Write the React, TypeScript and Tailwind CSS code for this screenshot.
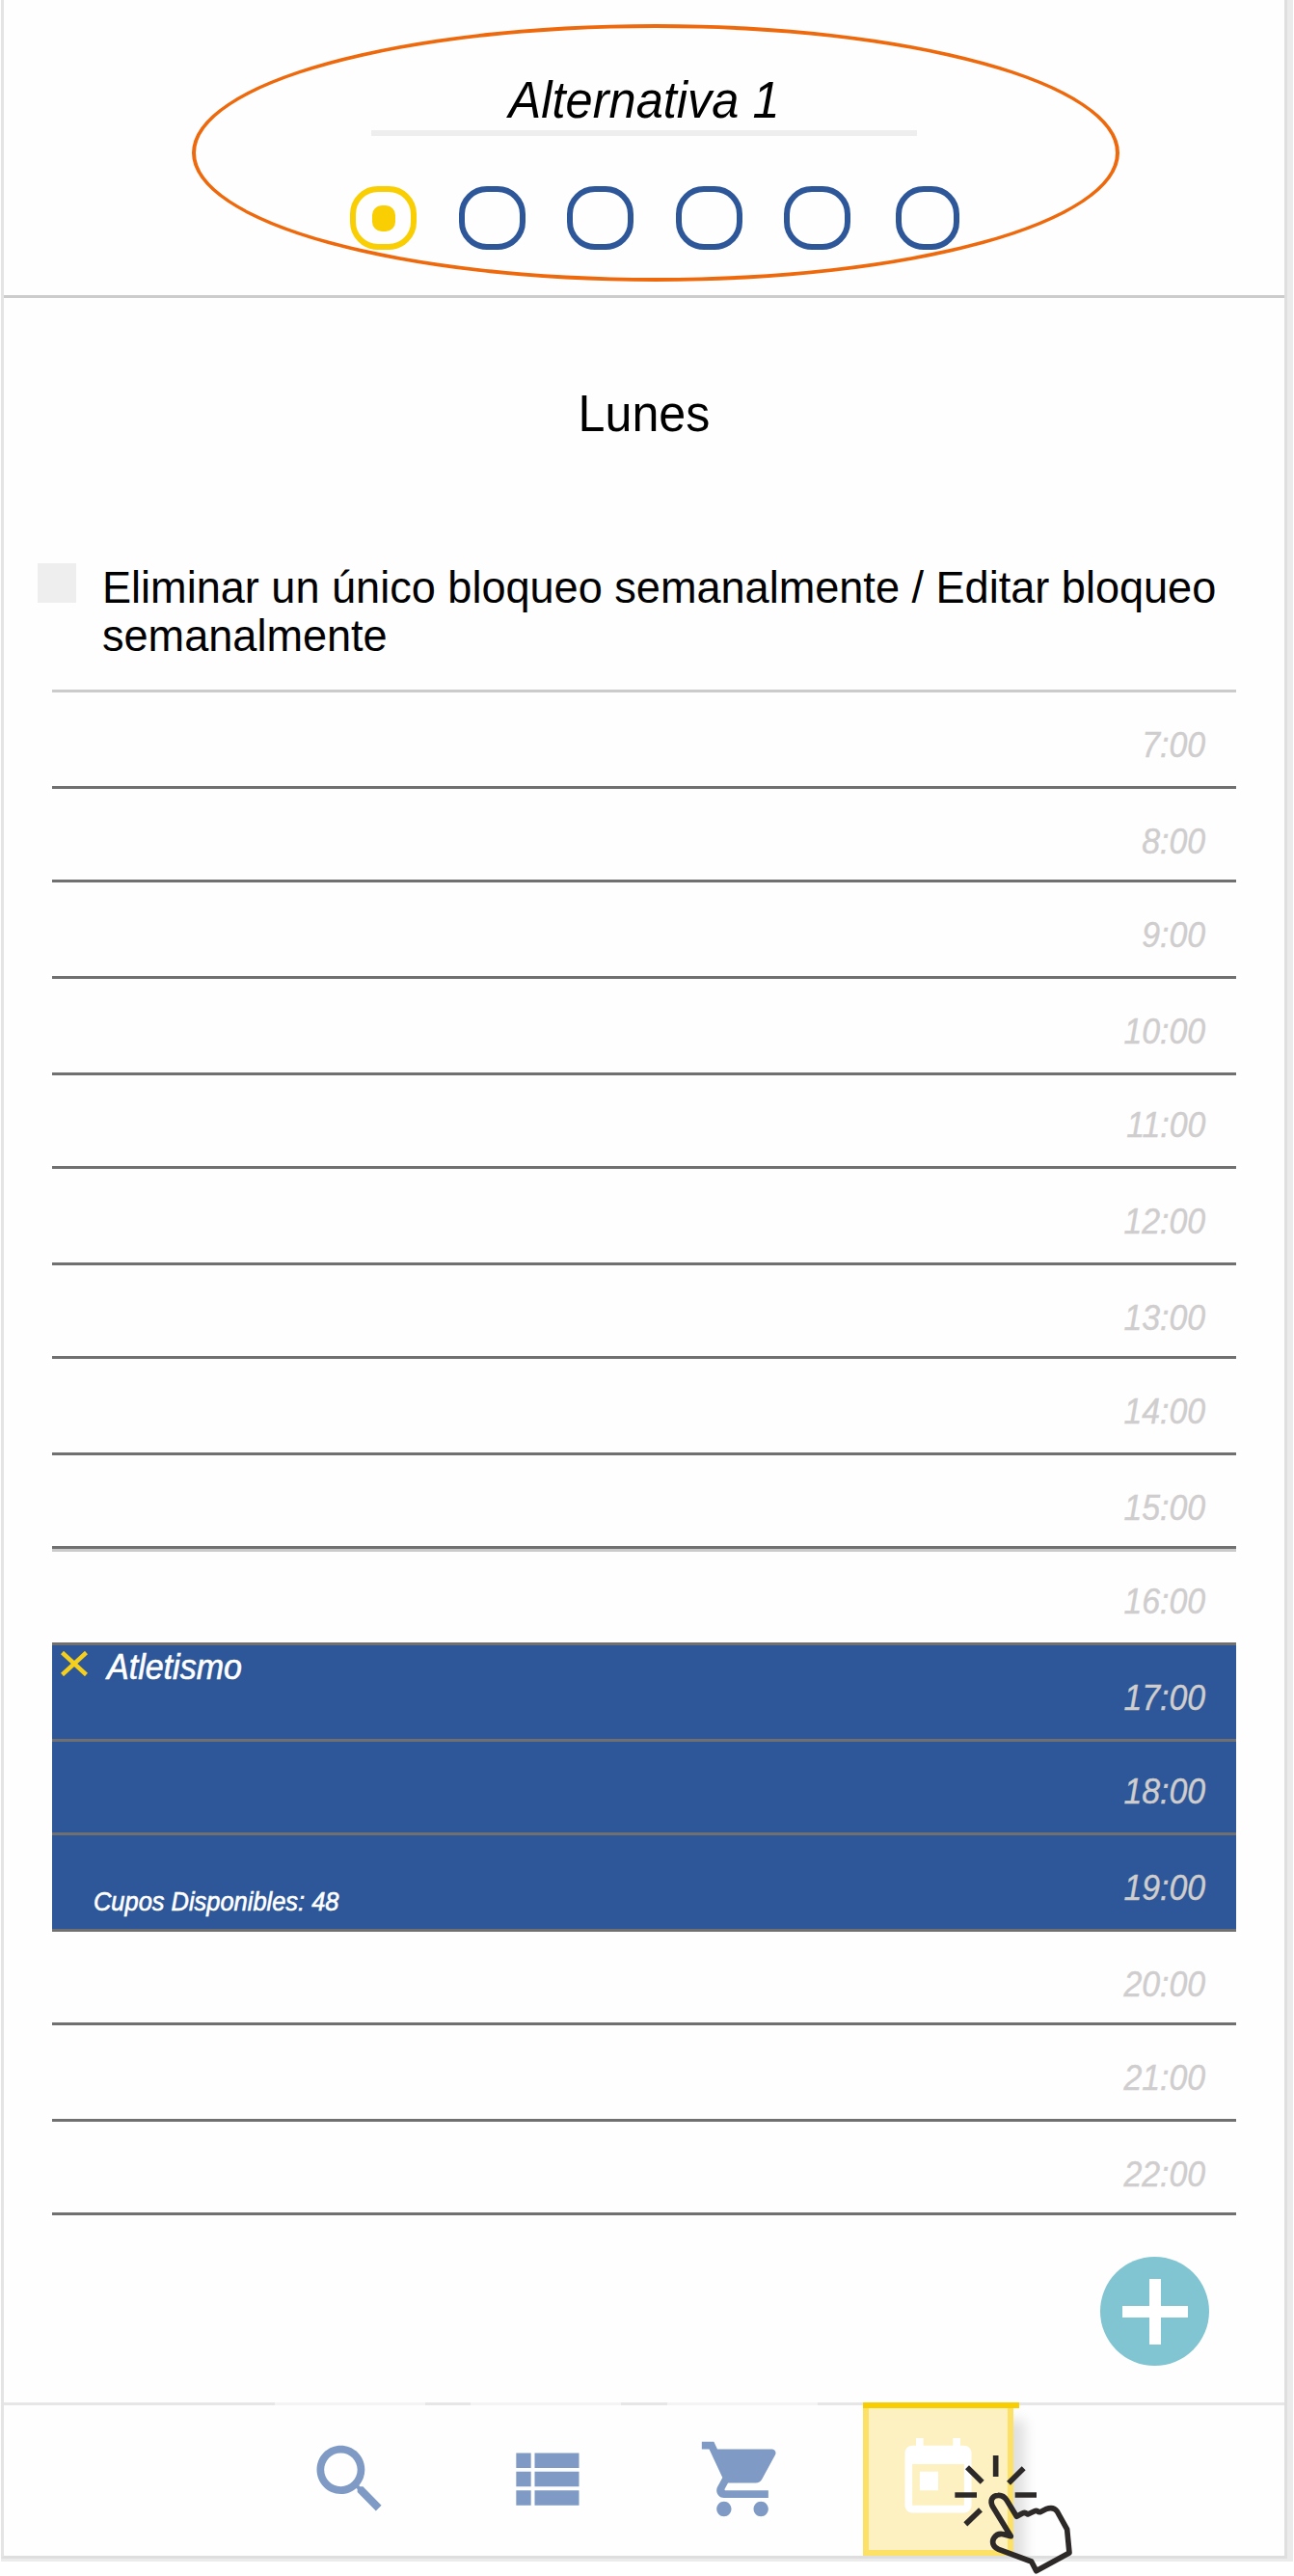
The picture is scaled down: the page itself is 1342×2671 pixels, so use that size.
import React from "react";

const rows: { time: string; height: string; busy?: boolean; raised?: boolean }[] = [
  { time: "7:00", height: "h-[100px]" },
  { time: "8:00", height: "h-[97px]" },
  { time: "9:00", height: "h-[100px]" },
  { time: "10:00", height: "h-[100px]" },
  { time: "11:00", height: "h-[97px]", raised: true },
  { time: "12:00", height: "h-[100px]" },
  { time: "13:00", height: "h-[97px]" },
  { time: "14:00", height: "h-[100px]" },
  { time: "15:00", height: "h-[97px]" },
  { time: "16:00", height: "h-[100px]" },
  { time: "17:00", height: "h-[100px]", busy: true },
  { time: "18:00", height: "h-[97px]", busy: true, raised: true },
  { time: "19:00", height: "h-[100px]", busy: true },
  { time: "20:00", height: "h-[97px]" },
  { time: "21:00", height: "h-[100px]" },
  { time: "22:00", height: "h-[97px]" },
];

const icons = {
  search:
    "M15.5 14h-.79l-.28-.27C15.41 12.59 16 11.11 16 9.5 16 5.91 13.09 3 9.5 3S3 5.91 3 9.5 5.91 16 9.5 16c1.61 0 3.09-.59 4.23-1.57l.27.28v.79l5 4.99L20.49 19l-4.99-5zm-6 0C7.01 14 5 11.99 5 9.5S7.01 5 9.5 5 14 7.01 14 9.5 11.99 14 9.5 14z",
  list: "M4 14h4v-4H4v4zm0 5h4v-4H4v4zM4 9h4V5H4v4zm5 5h12v-4H9v4zm0 5h12v-4H9v4zM9 5v4h12V5H9z",
  cart: "M7 18c-1.1 0-1.99.9-1.99 2S5.9 22 7 22s2-.9 2-2-.9-2-2-2zM1 2v2h2l3.6 7.59-1.35 2.45c-.16.28-.25.61-.25.96 0 1.1.9 2 2 2h12v-2H7.42c-.14 0-.25-.11-.25-.25l.03-.12.9-1.63h7.45c.75 0 1.41-.41 1.75-1.03l3.58-6.49c.08-.14.12-.31.12-.48 0-.55-.45-1-1-1H5.21l-.94-2H1zm16 16c-1.1 0-1.99.9-1.99 2s.89 2 1.99 2 2-.9 2-2-.9-2-2-2z",
  today:
    "M19 3h-1V1h-2v2H8V1H6v2H5c-1.11 0-1.99.9-1.99 2L3 19c0 1.1.89 2 2 2h14c1.1 0 2-.9 2-2V5c0-1.1-.9-2-2-2zm0 16H5V8h14v11zM7 10h5v5H7z",
};

function Icon({ d }: { d: string }) {
  return (
    <svg viewBox="0 0 24 24" preserveAspectRatio="none" className="h-[93px] w-[92px] shrink-0 fill-current">
      <path d={d} />
    </svg>
  );
}

function NavTab({ d }: { d: string }) {
  return (
    <button className="flex h-[159px] w-[156px] shrink-0 items-center justify-center border-t-[3px] border-[#f4f4f4] pb-1 text-[#7f9ac4]">
      <Icon d={d} />
    </button>
  );
}

function ClickHand() {
  return (
    <svg
      viewBox="375 210 390 390"
      className="absolute left-[985px] top-[2540px] z-20 h-[130px] w-[130px]"
      fill="none"
      stroke="#2d2928"
      strokeWidth="17"
    >
      <path d="M518 228V294M605 268L558 314M578 351H645M429 265L476 311M391 351H459M471 397L424 442" />
      <path
        strokeLinejoin="round"
        d="M644 587L629 558L527 520C508 512 505 496 513 484C520 473 531 471 542 473L565 479L509 388C498 367 508 353 525 352C537 351 545 356 552 367L583 418L601 408Q609 404 613 408L618 411L637 402Q646 398 650 403L656 404L674 395Q698 386 709 402L740 458L747 531Z"
      />
    </svg>
  );
}

function Schedule() {
  return (
    <div className="relative ml-[50px] w-[1228px] border-t-[3px] border-[#cbcbcb]">
      {rows.map((r) => (
        <div
          key={r.time}
          className={`${r.height} flex items-start justify-end border-b-[3px] border-[#707070] pr-[32px] text-[36px] leading-[34px] italic text-[#cfcdcd] ${
            r.raised ? "pt-[35px]" : "pt-[38px]"
          } ${r.busy ? "bg-[#2d5799]" : ""}`}
        >
          <span className="origin-right scale-x-[0.94] [-webkit-text-stroke:0.4px_#cfcdcd]">{r.time}</span>
        </div>
      ))}
      <div className="absolute left-0 top-[888px] h-[3px] w-full bg-[#cbcbcb]" />
      <div className="absolute left-0 top-[988px] h-[294px] w-[400px] italic text-white">
        <div className="flex items-start pl-[9px] pt-[6px]">
          <svg viewBox="0 0 28 26" className="h-[26px] w-[28px]" stroke="#f5cf1c" strokeWidth="4.5">
            <path d="M1.5 1.5L26.5 24.5M26.5 1.5L1.5 24.5" />
          </svg>
          <span className="ml-[20px] origin-left scale-x-[0.945] text-[36px] leading-[34px] [-webkit-text-stroke:0.6px_white]">
            Atletismo
          </span>
        </div>
        <div className="absolute bottom-[13px] left-[43px] origin-left scale-x-[0.942] whitespace-nowrap text-[27px] leading-[30px] [-webkit-text-stroke:0.6px_white]">
          Cupos Disponibles: 48
        </div>
      </div>
    </div>
  );
}

export default function App() {
  return (
    <div className="relative h-[2671px] w-[1342px] overflow-hidden bg-white pl-px font-['Liberation_Sans',sans-serif] text-black">
      <div className="flex h-[2656px] w-[1340px] border-b-[3px] border-r-[6px] border-[#ebebeb]">
        <div className="flex h-[2653px] w-[1334px] flex-col border-b-[3px] border-l-[3px] border-r-[3px] border-b-[#dedede] border-l-[#e4e4e4] border-r-[#dfdfdf] bg-[#fefefe]">
          <header className="relative h-[309px] shrink-0 border-b-[3px] border-[#cccccc]">
            <div className="ml-[381px] flex h-[141px] w-[566px] items-end justify-center border-b-[6px] border-[#eeeeee]">
              <h1 className="mb-[2px] scale-x-[0.936] text-[54px] leading-[60px] italic">Alternativa 1</h1>
            </div>
            <div className="ml-[359px] mt-[52px] flex gap-[43.5px]">
              <div className="flex h-[66px] w-[69px] items-center justify-center rounded-[29px] border-[6px] border-[#f9ce02]">
                <div className="h-[27px] w-[24px] rounded-[10px] bg-[#f9ce02]" />
              </div>
              {[2, 3, 4, 5].map((n) => (
                <div key={n} className="h-[66px] w-[69px] rounded-[29px] border-[6px] border-[#2d5799]" />
              ))}
              <div className="ml-[3px] h-[66px] w-[66px] rounded-[29px] border-[6px] border-[#2d5799]" />
            </div>
            <div className="absolute left-[195px] top-[25px] h-[267px] w-[962px] rounded-[50%] border-4 border-[#ee680c]" />
          </header>

          <h2 className="mt-[89px] h-[60px] scale-x-[0.93] text-center text-[54px] leading-[60px]">Lunes</h2>

          <label className="mt-[126px] flex h-[131px] pl-[35px]">
            <span className="h-[41px] w-[40px] shrink-0 bg-[#eeeeee]" />
            <span className="ml-[27px] w-[1200px] origin-left scale-x-[0.98] text-[46px] leading-[50px]">
              Eliminar un único bloqueo semanalmente / Editar bloqueo semanalmente
            </span>
          </label>

          <Schedule />

          <div className="flex h-[194px] shrink-0 items-start justify-end pr-[78px] pt-[43px]">
            <button className="flex h-[113px] w-[113px] items-center justify-center rounded-full bg-[#80c5d1]">
              <svg viewBox="0 0 68 68" className="h-[68px] w-[68px]" stroke="white" strokeWidth="12">
                <path d="M34 0V68M0 34H68" />
              </svg>
            </button>
          </div>

          <nav className="flex h-[159px] shrink-0 overflow-hidden">
            <div className="h-[3px] w-[281px] shrink-0 bg-[#e6e6e6]" />
            <NavTab d={icons.search} />
            <div className="h-[3px] w-[47px] shrink-0 bg-[#e6e6e6]" />
            <NavTab d={icons.list} />
            <div className="h-[3px] w-[48px] shrink-0 bg-[#e6e6e6]" />
            <NavTab d={icons.cart} />
            <div className="h-[3px] w-[47px] shrink-0 bg-[#e6e6e6]" />
            <div className="relative z-10 h-[159px] w-[162px] shrink-0">
              <div className="h-[6px] w-[162px] bg-[#f8ce00]" />
              <button className="flex h-[153px] w-[156px] items-center justify-center border-6 border-t-0 border-[#fce166] bg-[#fdf1c1] text-white shadow-[12px_12px_12px_rgba(0,0,0,0.12)]">
                <Icon d={icons.today} />
              </button>
            </div>
            <div className="h-[3px] grow bg-[#e6e6e6]" />
          </nav>
        </div>
      </div>
      <ClickHand />
    </div>
  );
}
